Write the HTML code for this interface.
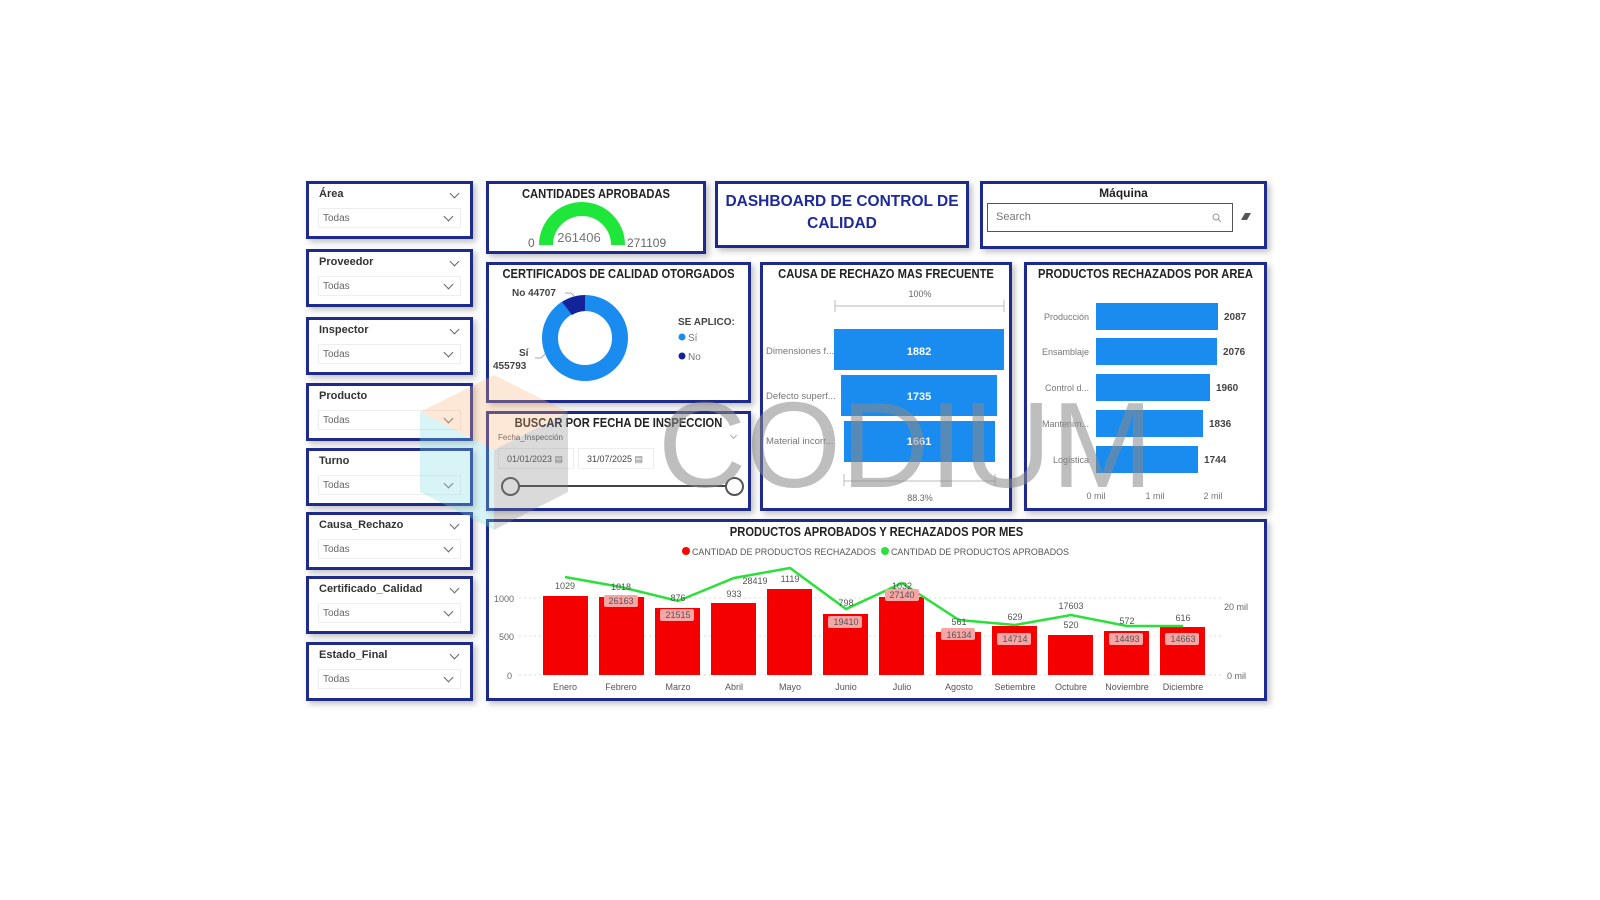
<!DOCTYPE html>
<html><head><meta charset="utf-8">
<style>
*{margin:0;padding:0;box-sizing:border-box}
body{width:1600px;height:900px;background:#fff;position:relative;overflow:hidden;font-family:"Liberation Sans",sans-serif;color:#333}
.b{position:absolute;border:3px solid #1e2a8c;background:#fff;box-shadow:3px 3px 6px rgba(0,0,0,.25)}
.t{position:absolute;left:-20px;right:-20px;text-align:center;white-space:nowrap;font-weight:bold;font-size:13px;color:#222;transform:scaleX(.86)}
.sl .lab{position:absolute;left:10px;top:4px;font-size:11px;font-weight:bold;color:#333}
.sl .dd{position:absolute;left:9px;right:9px;top:24px;height:20px;border:1px solid #eee;font-size:10px;color:#666;padding:4px 0 0 4px}
.chev{position:absolute;width:7px;height:7px;border-right:1px solid #666;border-bottom:1px solid #666;transform:rotate(45deg)}
</style></head><body>

<div class="b sl" style="left:306px;top:181px;width:167px;height:58px"><div class="lab">Área</div><div class="chev" style="right:12px;top:6px"></div><div class="dd">Todas<div class="chev" style="right:8px;top:4px"></div></div></div>
<div class="b sl" style="left:306px;top:249px;width:167px;height:58px"><div class="lab">Proveedor</div><div class="chev" style="right:12px;top:6px"></div><div class="dd">Todas<div class="chev" style="right:8px;top:4px"></div></div></div>
<div class="b sl" style="left:306px;top:317px;width:167px;height:58px"><div class="lab">Inspector</div><div class="chev" style="right:12px;top:6px"></div><div class="dd">Todas<div class="chev" style="right:8px;top:4px"></div></div></div>
<div class="b sl" style="left:306px;top:383px;width:167px;height:58px"><div class="lab">Producto</div><div class="dd">Todas<div class="chev" style="right:8px;top:4px"></div></div></div>
<div class="b sl" style="left:306px;top:448px;width:167px;height:58px"><div class="lab">Turno</div><div class="dd">Todas<div class="chev" style="right:8px;top:4px"></div></div></div>
<div class="b sl" style="left:306px;top:512px;width:167px;height:58px"><div class="lab">Causa_Rechazo</div><div class="chev" style="right:12px;top:6px"></div><div class="dd">Todas<div class="chev" style="right:8px;top:4px"></div></div></div>
<div class="b sl" style="left:306px;top:576px;width:167px;height:58px"><div class="lab">Certificado_Calidad</div><div class="chev" style="right:12px;top:6px"></div><div class="dd">Todas<div class="chev" style="right:8px;top:4px"></div></div></div>
<div class="b sl" style="left:306px;top:642px;width:167px;height:59px"><div class="lab">Estado_Final</div><div class="chev" style="right:12px;top:6px"></div><div class="dd">Todas<div class="chev" style="right:8px;top:4px"></div></div></div>

<div class="b" style="left:486px;top:181px;width:220px;height:73px">
<div class="t" style="top:2px">CANTIDADES APROBADAS</div>
<svg width="214" height="67" style="position:absolute;left:0;top:0">
<path d="M57 61 A36 36 0 0 1 129 61" fill="none" stroke="#1fe63a" stroke-width="14"/>
<text x="39" y="63" font-size="12" fill="#666" font-family="Liberation Sans">0</text>
<text x="90" y="58" font-size="13" fill="#777" text-anchor="middle" font-family="Liberation Sans">261406</text>
<text x="138" y="63" font-size="12" fill="#666" font-family="Liberation Sans">271109</text>
</svg></div>

<div class="b" style="left:715px;top:181px;width:254px;height:67px">
<div style="position:absolute;left:0;right:0;top:7px;text-align:center;font-weight:bold;font-size:15.5px;line-height:22px;color:#1e2a9c">DASHBOARD DE CONTROL DE<br>CALIDAD</div></div>

<div class="b" style="left:980px;top:181px;width:287px;height:68px">
<div style="position:absolute;left:0;right:0;top:2px;text-align:center;font-weight:bold;font-size:12px;color:#222">Máquina</div>
<div style="position:absolute;left:4px;top:19px;width:246px;height:29px;border:1px solid #555;font-size:11px;color:#777;padding:7px 0 0 8px">Search
<svg width="10" height="10" style="position:absolute;right:10px;top:9px"><circle cx="4" cy="4" r="3" fill="none" stroke="#999"/><path d="M6 6 9 9" stroke="#999"/></svg></div>
<svg width="12" height="10" style="position:absolute;right:12px;top:27px"><path d="M1 9 L5 2 L11 2 L7 9Z" fill="#555"/></svg>
</div>

<div class="b" style="left:486px;top:262px;width:265px;height:141px">
<div class="t" style="top:1px">CERTIFICADOS DE CALIDAD OTORGADOS</div>
<svg width="259" height="135" style="position:absolute;left:0;top:0">
<circle cx="96" cy="73" r="35" fill="none" stroke="#1a8cf0" stroke-width="16"/>
<path d="M96 30 A43 43 0 0 0 73 37 L83 50 A27 27 0 0 1 96 46Z" fill="#13239a"/>
<text x="23" y="31" font-size="10" font-weight="bold" fill="#444">No 44707</text>
<path d="M76 28 h6 l3 3" fill="none" stroke="#aaa"/>
<text x="30" y="91" font-size="10" font-weight="bold" fill="#444">Sí</text>
<text x="4" y="104" font-size="10" font-weight="bold" fill="#444">455793</text>
<path d="M46 93 h6 l4 -4" fill="none" stroke="#aaa"/>
<text x="189" y="60" font-size="10" font-weight="bold" fill="#444">SE APLICO:</text>
<circle cx="193" cy="72" r="3.5" fill="#1a8cf0"/><text x="199" y="76" font-size="10" fill="#777">Sí</text>
<circle cx="193" cy="91" r="3.5" fill="#13239a"/><text x="199" y="95" font-size="10" fill="#777">No</text>
</svg></div>

<div class="b" style="left:486px;top:411px;width:265px;height:100px">
<div class="t" style="top:1px">BUSCAR POR FECHA DE INSPECCION</div>
<div style="position:absolute;left:9px;top:19px;font-size:8px;color:#555">Fecha_Inspección</div>
<div class="chev" style="right:12px;top:19px;width:5px;height:5px;border-color:#aaa"></div>
<div style="position:absolute;left:9px;top:34px;width:76px;height:21px;border:1px solid #eee;font-size:9px;color:#444;padding:5px 0 0 8px">01/01/2023 <span style="color:#777">▤</span></div>
<div style="position:absolute;left:89px;top:34px;width:76px;height:21px;border:1px solid #eee;font-size:9px;color:#444;padding:5px 0 0 8px">31/07/2025 <span style="color:#777">▤</span></div>
<div style="position:absolute;left:20px;top:71px;width:226px;height:2px;background:#444"></div>
<div style="position:absolute;left:12px;top:63px;width:19px;height:19px;border:2px solid #555;border-radius:50%;background:#fff"></div>
<div style="position:absolute;left:236px;top:63px;width:19px;height:19px;border:2px solid #555;border-radius:50%;background:#fff"></div>
</div>

<div class="b" style="left:760px;top:262px;width:252px;height:249px">
<div class="t" style="top:1px">CAUSA DE RECHAZO MAS FRECUENTE</div>
<svg width="246" height="243" style="position:absolute;left:0;top:0">
<text x="157" y="32" font-size="9" fill="#666" text-anchor="middle">100%</text>
<path d="M72 35 v12 M72 41 H241 M241 35 v12" stroke="#bbb" fill="none"/>
<rect x="71" y="64" width="170" height="41" fill="#1a8cf0"/>
<rect x="78" y="110" width="156" height="41" fill="#1a8cf0"/>
<rect x="81" y="156" width="151" height="41" fill="#1a8cf0"/>
<text x="156" y="90" font-size="11" font-weight="bold" fill="#fff" text-anchor="middle">1882</text>
<text x="156" y="135" font-size="11" font-weight="bold" fill="#fff" text-anchor="middle">1735</text>
<text x="156" y="180" font-size="11" font-weight="bold" fill="#fff" text-anchor="middle">1661</text>
<text x="3" y="89" font-size="9.5" fill="#777">Dimensiones f...</text>
<text x="3" y="134" font-size="9.5" fill="#777">Defecto superf...</text>
<text x="3" y="179" font-size="9.5" fill="#777">Material incorr...</text>
<path d="M81 209 v12 M81 216 H232 M232 209 v12" stroke="#bbb" fill="none"/>
<text x="157" y="236" font-size="9" fill="#666" text-anchor="middle">88.3%</text>
</svg></div>

<div class="b" style="left:1024px;top:262px;width:243px;height:249px">
<div class="t" style="top:1px">PRODUCTOS RECHAZADOS POR AREA</div>
<svg width="237" height="243" style="position:absolute;left:0;top:0">
<rect x="69" y="38" width="122" height="27" fill="#1a8cf0"/>
<rect x="69" y="73" width="121" height="27" fill="#1a8cf0"/>
<rect x="69" y="109" width="114" height="27" fill="#1a8cf0"/>
<rect x="69" y="145" width="107" height="27" fill="#1a8cf0"/>
<rect x="69" y="181" width="102" height="27" fill="#1a8cf0"/>
<g font-size="9" fill="#777" text-anchor="end"><text x="62" y="55">Producción</text><text x="62" y="90">Ensamblaje</text><text x="62" y="126">Control d...</text><text x="62" y="162">Mantenim...</text><text x="62" y="198">Logística</text></g>
<g font-size="10" font-weight="bold" fill="#444"><text x="197" y="55">2087</text><text x="196" y="90">2076</text><text x="189" y="126">1960</text><text x="182" y="162">1836</text><text x="177" y="198">1744</text></g>
<g font-size="9" fill="#777" text-anchor="middle"><text x="69" y="234">0 mil</text><text x="128" y="234">1 mil</text><text x="186" y="234">2 mil</text></g>
</svg></div>

<div class="b" style="left:486px;top:519px;width:781px;height:182px">
<div class="t" style="top:2px">PRODUCTOS APROBADOS Y RECHAZADOS POR MES</div>
<svg width="775" height="176" style="position:absolute;left:0;top:0">
<g font-size="9.5" fill="#555"><circle cx="197" cy="29" r="4" fill="#f00"/><text x="203" y="33" textLength="184" lengthAdjust="spacingAndGlyphs">CANTIDAD DE PRODUCTOS RECHAZADOS</text><circle cx="396" cy="29" r="4" fill="#2be03a"/><text x="402" y="33" textLength="178" lengthAdjust="spacingAndGlyphs">CANTIDAD DE PRODUCTOS APROBADOS</text></g>
<g stroke="#ddd" stroke-dasharray="2 3"><path d="M30 76 H735 M30 114 H735 M30 153 H735"/></g>
<g font-size="9" fill="#666"><text x="5" y="80">1000</text><text x="10" y="118">500</text><text x="18" y="157">0</text><text x="735" y="88">20 mil</text><text x="738" y="157">0 mil</text></g>
<g fill="#f40000">
<rect x="54" y="74" width="45" height="79"/><rect x="110" y="75" width="45" height="78"/><rect x="166" y="86" width="45" height="67"/><rect x="222" y="81" width="45" height="72"/><rect x="278" y="67" width="45" height="86"/><rect x="334" y="92" width="45" height="61"/><rect x="390" y="75" width="45" height="78"/><rect x="447" y="110" width="45" height="43"/><rect x="503" y="104" width="45" height="49"/><rect x="559" y="113" width="45" height="40"/><rect x="615" y="109" width="45" height="44"/><rect x="671" y="105" width="45" height="48"/>
</g>
<polyline points="76,55 132,65 189,79 245,56 301,46 357,87 413,61 470,98 526,103 582,93 638,104 694,104" fill="none" stroke="#2be03a" stroke-width="2.5"/>
<g fill="#f7a5a5"><rect x="115" y="73" width="34" height="12" rx="2"/><rect x="171" y="87" width="34" height="12" rx="2"/><rect x="339" y="94" width="34" height="12" rx="2"/><rect x="396" y="67" width="34" height="12" rx="2"/><rect x="452" y="106" width="34" height="12" rx="2"/><rect x="508" y="111" width="34" height="12" rx="2"/><rect x="620" y="111" width="34" height="12" rx="2"/><rect x="676" y="111" width="34" height="12" rx="2"/></g>
<g font-size="9" fill="#555" text-anchor="middle">
<text x="76" y="67">1029</text><text x="132" y="68">1018</text><text x="189" y="79">876</text><text x="245" y="75">933</text><text x="301" y="60">1119</text><text x="357" y="84">798</text><text x="413" y="67">1032</text><text x="470" y="103">561</text><text x="526" y="98">629</text><text x="582" y="106">520</text><text x="638" y="102">572</text><text x="694" y="99">616</text>
<text x="132" y="82">26163</text><text x="189" y="96">21515</text><text x="266" y="62">28419</text><text x="357" y="103">19410</text><text x="413" y="76">27140</text><text x="470" y="116">16134</text><text x="526" y="120">14714</text><text x="582" y="87">17603</text><text x="638" y="120">14493</text><text x="694" y="120">14663</text>
<text x="76" y="168">Enero</text><text x="132" y="168">Febrero</text><text x="189" y="168">Marzo</text><text x="245" y="168">Abril</text><text x="301" y="168">Mayo</text><text x="357" y="168">Junio</text><text x="413" y="168">Julio</text><text x="470" y="168">Agosto</text><text x="526" y="168">Setiembre</text><text x="582" y="168">Octubre</text><text x="638" y="168">Noviembre</text><text x="694" y="168">Diciembre</text>
</g></svg></div>

<svg width="1600" height="900" style="position:absolute;left:0;top:0;pointer-events:none">
<g opacity="0.3">
<path d="M494 375 L568 412 L494 450 L420 412Z" fill="#f9b27a"/>
<path d="M420 412 L494 450 L494 530 L420 492Z" fill="#7fdde6"/>
<path d="M494 450 L568 412 L568 492 L494 530Z" fill="#888"/>
</g>
<text x="658" y="487" font-size="122" fill="#8a8a8a" opacity="0.55" font-family="Liberation Sans" textLength="495" lengthAdjust="spacingAndGlyphs">CODIUM</text>
</svg>
</body></html>
